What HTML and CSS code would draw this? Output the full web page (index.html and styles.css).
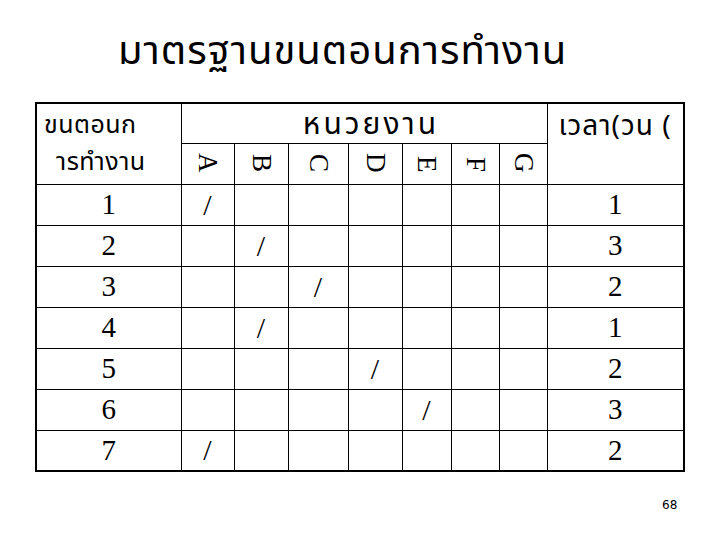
FILE: index.html
```html
<!DOCTYPE html>
<html lang="th">
<head>
<meta charset="utf-8">
<title>มาตรฐานขนตอนการทำงาน</title>
<link rel="stylesheet" href="styles.css">
</head>
<body>
<div class="slide">
  <h1 class="title">มาตรฐานขนตอนการทำงาน</h1>
  <table class="grid">
    <colgroup>
      <col class="c-step">
      <col class="c-a">
      <col class="c-b">
      <col class="c-c">
      <col class="c-d">
      <col class="c-e">
      <col class="c-f">
      <col class="c-g">
      <col class="c-time">
    </colgroup>
    <thead>
      <tr class="hrow1">
        <th rowspan="2" class="step-h"><span class="l1">ขนตอนก</span><span class="l2">ารทำงาน</span></th>
        <th colspan="7" class="unit-h">หนวยงาน</th>
        <th rowspan="2" class="time-h">เวลา(วน (</th>
      </tr>
      <tr class="hrow2">
        <th class="letter"><span>A</span></th>
        <th class="letter"><span>B</span></th>
        <th class="letter"><span>C</span></th>
        <th class="letter"><span>D</span></th>
        <th class="letter"><span>E</span></th>
        <th class="letter"><span>F</span></th>
        <th class="letter"><span>G</span></th>
      </tr>
    </thead>
    <tbody>
      <tr><td class="num">1</td><td class="mark">/</td><td></td><td></td><td></td><td></td><td></td><td></td><td class="num">1</td></tr>
      <tr><td class="num">2</td><td></td><td class="mark">/</td><td></td><td></td><td></td><td></td><td></td><td class="num">3</td></tr>
      <tr><td class="num">3</td><td></td><td></td><td class="mark">/</td><td></td><td></td><td></td><td></td><td class="num">2</td></tr>
      <tr><td class="num">4</td><td></td><td class="mark">/</td><td></td><td></td><td></td><td></td><td></td><td class="num">1</td></tr>
      <tr><td class="num">5</td><td></td><td></td><td></td><td class="mark">/</td><td></td><td></td><td></td><td class="num">2</td></tr>
      <tr><td class="num">6</td><td></td><td></td><td></td><td></td><td class="mark">/</td><td></td><td></td><td class="num">3</td></tr>
      <tr><td class="num">7</td><td class="mark">/</td><td></td><td></td><td></td><td></td><td></td><td></td><td class="num">2</td></tr>
    </tbody>
  </table>
  <div class="page-no">68</div>
</div>
</body>
</html>
```

FILE: styles.css
```css
html, body {
  margin: 0;
  padding: 0;
  background: #fff;
}

.slide {
  width: 720px;
  height: 540px;
  position: relative;
  overflow: hidden;
  color: #000;
  font-family: "Noto Sans Thai", "Noto Sans", "DejaVu Sans", sans-serif;
}

.title {
  margin: 0;
  padding: 26px 0 0 118px;
  font-size: 40px;
  font-weight: normal;
  letter-spacing: 1px;
  line-height: 52px;
  height: 52px;
}

.grid {
  margin: 24px 0 0 35px;
  border-collapse: collapse;
  table-layout: fixed;
  width: 648px;
  border: 2px solid #000;
}

.grid th,
.grid td {
  border: 1px solid #000;
  padding: 0;
  font-weight: normal;
}

.c-step { width: 145px; }
.c-a { width: 53px; }
.c-b { width: 54px; }
.c-c { width: 60px; }
.c-d { width: 54px; }
.c-e { width: 49px; }
.c-f { width: 48px; }
.c-g { width: 48px; }
.c-time { width: 137px; }

.hrow1 { height: 40px; }
.hrow2 { height: 41px; }
.grid tbody tr { height: 41px; }

.grid .step-h {
  text-align: left;
  vertical-align: top;
  font-size: 25px;
  line-height: 37px;
  padding-top: 3px;
}

.step-h .l1 {
  display: block;
  padding-left: 7px;
  letter-spacing: 0.5px;
}

.step-h .l2 {
  display: block;
  padding-left: 19px;
  letter-spacing: 0.5px;
}

.grid .unit-h {
  font-size: 30px;
  letter-spacing: 3px;
  line-height: 32px;
  text-align: center;
  padding: 4px 0 0 14px;
}

.grid .time-h {
  font-size: 28px;
  letter-spacing: 1px;
  line-height: 32px;
  vertical-align: top;
  text-align: left;
  padding: 7px 0 0 11px;
}

.letter {
  font-family: "Liberation Serif", serif;
  font-size: 27px;
  text-align: center;
  vertical-align: middle;
}

.letter span {
  writing-mode: vertical-rl;
  display: inline-block;
  line-height: 1;
}

.num {
  font-family: "Liberation Serif", serif;
  font-size: 29px;
  text-align: center;
  line-height: 1;
}

.mark {
  font-family: "Liberation Serif", serif;
  font-size: 30px;
  text-align: center;
  line-height: 1;
}

.page-no {
  position: absolute;
  left: 662px;
  top: 498px;
  font-family: "DejaVu Sans", sans-serif;
  font-size: 12px;
}
```
